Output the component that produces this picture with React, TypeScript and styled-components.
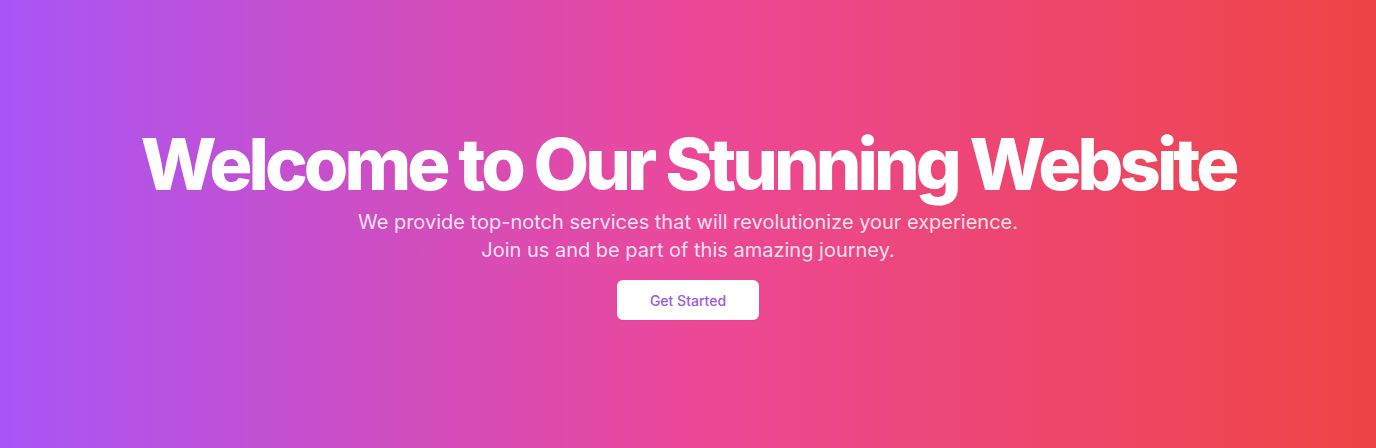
import React from "react";
import styled, { createGlobalStyle } from "styled-components";

const Global = createGlobalStyle`
  html, body { margin: 0; padding: 0; }
  body { font-family: Inter, "Noto Sans", sans-serif; }
  * { box-sizing: border-box; }
`;

const Hero = styled.section`
  height: 448px;
  width: 100%;
  background: linear-gradient(to right, #a855f7, #ec4899, #ef4444);
  display: flex;
  flex-direction: column;
  align-items: center;
  justify-content: center;
  text-align: center;
  color: #fff;
`;

const Title = styled.h1`
  margin: 0 0 8px;
  font-size: 72px;
  line-height: 1;
  font-weight: 800;
  letter-spacing: -0.055em;
`;

const Lead = styled.p`
  margin: 0;
  font-size: 20px;
  line-height: 28px;
  color: rgba(255, 255, 255, 0.85);
`;

const Cta = styled.button`
  margin-top: 16px;
  height: 40px;
  padding: 0 33px;
  border: none;
  border-radius: 6px;
  background: #fff;
  color: #9a5ae0;
  font-family: Inter, sans-serif;
  font-size: 14px;
  font-weight: 500;
  cursor: pointer;
  box-shadow: 0 1px 2px rgba(0, 0, 0, 0.05);
`;

export default function App() {
  return (
    <>
      <Global />
      <Hero>
        <Title>Welcome to Our Stunning Website</Title>
        <Lead>
          We provide top-notch services that will revolutionize your experience.
          <br />
          Join us and be part of this amazing journey.
        </Lead>
        <Cta>Get Started</Cta>
      </Hero>
    </>
  );
}
